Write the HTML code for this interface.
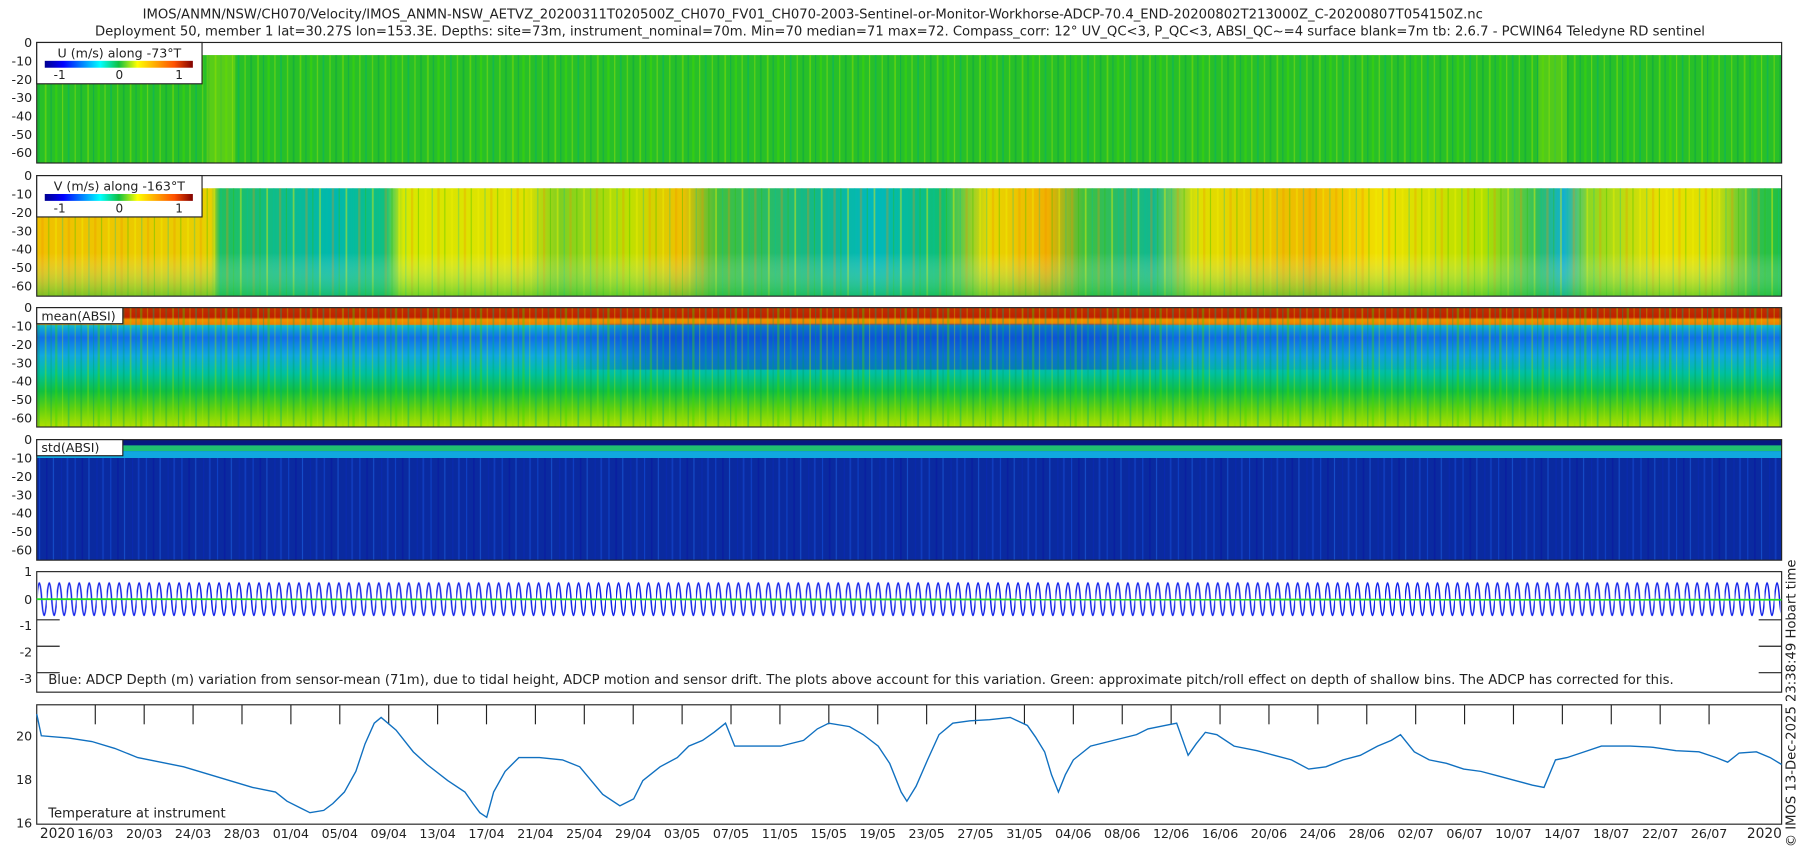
<!DOCTYPE html>
<html><head><meta charset="utf-8"><style>
html,body{margin:0;padding:0;background:#fff;}
svg{display:block;}
text{font-family:"DejaVu Sans","Liberation Sans",sans-serif;fill:#222;}
</style></head><body>
<svg width="1800" height="850" viewBox="0 0 1568 740.5" preserveAspectRatio="none" xmlns="http://www.w3.org/2000/svg">
<defs>
<pattern id="strG" width="37" height="10" patternUnits="userSpaceOnUse">
<rect x="2" width="1.5" height="10" fill="#8de000" opacity=".5"/><rect x="7" width="1" height="10" fill="#00a060" opacity=".5"/>
<rect x="11" width="2" height="10" fill="#40d800" opacity=".5"/><rect x="17" width="1" height="10" fill="#c0f000" opacity=".4"/>
<rect x="22" width="1.5" height="10" fill="#00b070" opacity=".5"/><rect x="28" width="1" height="10" fill="#a8e800" opacity=".45"/>
<rect x="33" width="1.5" height="10" fill="#009a50" opacity=".4"/></pattern>
<pattern id="strB" width="31" height="10" patternUnits="userSpaceOnUse">
<rect x="3" width="1" height="10" fill="#1050e0" opacity=".6"/><rect x="9" width="1.5" height="10" fill="#0818a0" opacity=".6"/>
<rect x="15" width="1" height="10" fill="#2070f0" opacity=".5"/><rect x="22" width="1" height="10" fill="#0828b8" opacity=".6"/>
<rect x="27" width="1.5" height="10" fill="#1858e8" opacity=".4"/></pattern>
<pattern id="strY" width="23" height="10" patternUnits="userSpaceOnUse">
<rect x="2" width="1.5" height="10" fill="#f0f000" opacity=".45"/><rect x="8" width="1" height="10" fill="#00c0a0" opacity=".35"/>
<rect x="13" width="2" height="10" fill="#f09000" opacity=".3"/><rect x="19" width="1" height="10" fill="#30c000" opacity=".4"/></pattern>
<pattern id="wave" width="8.7" height="44" patternUnits="userSpaceOnUse" x="32" y="500">
<path d="M0 22 C1.5 3 3 3 4.35 22 C5.7 41 7.2 41 8.7 22" fill="none" stroke="#1020e8" stroke-width="1.3"/></pattern>
<linearGradient id="v1" x1="0" x2="1" y1="0" y2="0">
<stop offset="0" stop-color="#f0c000"/><stop offset=".1" stop-color="#e8d000"/><stop offset=".105" stop-color="#20c060"/>
<stop offset=".17" stop-color="#00b8b0"/><stop offset=".2" stop-color="#10c080"/><stop offset=".21" stop-color="#d8e800"/>
<stop offset=".28" stop-color="#e0e000"/><stop offset=".3" stop-color="#80d020"/><stop offset=".34" stop-color="#c0e000"/>
<stop offset=".37" stop-color="#f0c000"/><stop offset=".39" stop-color="#40c040"/><stop offset=".45" stop-color="#10b890"/>
<stop offset=".48" stop-color="#00b8c0"/><stop offset=".52" stop-color="#10c070"/><stop offset=".545" stop-color="#e8d800"/>
<stop offset=".58" stop-color="#f0b000"/><stop offset=".6" stop-color="#40c040"/><stop offset=".64" stop-color="#10b890"/>
<stop offset=".665" stop-color="#e0e000"/><stop offset=".73" stop-color="#f0b800"/><stop offset=".77" stop-color="#f0e000"/>
<stop offset=".83" stop-color="#b0e000"/><stop offset=".86" stop-color="#30c060"/><stop offset=".875" stop-color="#10b0d0"/>
<stop offset=".89" stop-color="#90d820"/><stop offset=".93" stop-color="#e8e000"/><stop offset=".96" stop-color="#e0e000"/>
<stop offset=".985" stop-color="#30c050"/><stop offset="1" stop-color="#20c040"/></linearGradient>
<linearGradient id="v1v" x1="0" x2="0" y1="0" y2="1">
<stop offset="0" stop-color="#fff" stop-opacity="0"/><stop offset=".6" stop-color="#fff" stop-opacity="0"/><stop offset="1" stop-color="#20c040" stop-opacity=".55"/></linearGradient>
<linearGradient id="m3" x1="0" x2="0" y1="0" y2="1">
<stop offset="0" stop-color="#c03000"/><stop offset=".08" stop-color="#c02000"/><stop offset=".1" stop-color="#f09000"/>
<stop offset=".14" stop-color="#f08000"/><stop offset=".15" stop-color="#10b8d0"/><stop offset=".25" stop-color="#1070e8"/>
<stop offset=".4" stop-color="#10a8e0"/><stop offset=".55" stop-color="#00c0a0"/><stop offset=".7" stop-color="#10c040"/>
<stop offset=".85" stop-color="#60d010"/><stop offset="1" stop-color="#b0e000"/></linearGradient>
<linearGradient id="m3h" x1="0" x2="1" y1="0" y2="0">
<stop offset="0" stop-color="#0830c0" stop-opacity="0"/><stop offset=".3" stop-color="#0830c0" stop-opacity="0"/>
<stop offset=".36" stop-color="#0830c0" stop-opacity=".45"/><stop offset=".6" stop-color="#0830c0" stop-opacity=".45"/>
<stop offset=".66" stop-color="#0830c0" stop-opacity=".1"/><stop offset="1" stop-color="#0830c0" stop-opacity="0"/></linearGradient>
<linearGradient id="jet" x1="0" x2="1"><stop offset="0" stop-color="#00008f"/><stop offset=".125" stop-color="#0000ff"/><stop offset=".375" stop-color="#00ffff"/><stop offset=".5" stop-color="#10c040"/><stop offset=".625" stop-color="#ffff00"/><stop offset=".875" stop-color="#ff5000"/><stop offset="1" stop-color="#800000"/></linearGradient>
</defs>

<text x="708" y="16" font-size="11.5" text-anchor="middle">IMOS/ANMN/NSW/CH070/Velocity/IMOS_ANMN-NSW_AETVZ_20200311T020500Z_CH070_FV01_CH070-2003-Sentinel-or-Monitor-Workhorse-ADCP-70.4_END-20200802T213000Z_C-20200807T054150Z.nc</text>
<text x="784" y="31" font-size="11.5" text-anchor="middle">Deployment 50, member 1 lat=30.27S lon=153.3E. Depths: site=73m, instrument_nominal=70m. Min=70 median=71 max=72. Compass_corr: 12° UV_QC&lt;3, P_QC&lt;3, ABSI_QC~=4 surface blank=7m tb: 2.6.7 - PCWIN64 Teledyne RD sentinel</text>

<!-- Panel 1 -->
<rect x="32" y="48" width="1520" height="94" fill="#28c028"/>
<rect x="32" y="48" width="1520" height="94" fill="url(#strG)"/>
<rect x="180" y="48" width="25" height="94" fill="#a0e000" opacity=".4"/>
<rect x="1340" y="48" width="25" height="94" fill="#a0e000" opacity=".35"/>
<rect x="32" y="37" width="1520" height="105" fill="none" stroke="#222" stroke-width="1"/>
<!-- Panel 2 -->
<rect x="32" y="164" width="1520" height="94" fill="url(#v1)"/>
<rect x="32" y="164" width="1520" height="94" fill="url(#strY)"/>
<rect x="32" y="164" width="1520" height="94" fill="url(#v1v)"/>
<rect x="32" y="153" width="1520" height="105" fill="none" stroke="#222"/>
<!-- Panel 3 -->
<rect x="32" y="268" width="1520" height="104" fill="url(#m3)"/>
<rect x="32" y="282" width="1520" height="40" fill="url(#m3h)"/>
<rect x="32" y="268" width="1520" height="104" fill="url(#strG)" opacity=".8"/>
<rect x="32" y="268" width="1520" height="104" fill="none" stroke="#222"/>
<!-- Panel 4 -->
<rect x="32" y="383" width="1520" height="105" fill="#0a2aa0"/>
<rect x="32" y="383" width="1520" height="5" fill="#061a80"/>
<rect x="32" y="388" width="1520" height="5" fill="#20c070"/>
<rect x="32" y="393" width="1520" height="6" fill="#10a8e0"/>
<rect x="32" y="399" width="1520" height="89" fill="url(#strB)"/>
<rect x="32" y="383" width="1520" height="105" fill="none" stroke="#222"/>
<!-- Panel 5 -->
<rect x="32" y="498" width="1520" height="105" fill="#fff" stroke="#222"/>
<rect x="33" y="500" width="1518" height="44" fill="url(#wave)"/>
<line x1="32" y1="522" x2="1552" y2="522.5" stroke="#20e020" stroke-width="1.6"/>
<g stroke="#222"><line x1="32" y1="540" x2="52" y2="540"/><line x1="32" y1="563" x2="52" y2="563"/><line x1="32" y1="586" x2="52" y2="586"/>
<line x1="1532" y1="540" x2="1552" y2="540"/><line x1="1532" y1="563" x2="1552" y2="563"/><line x1="1532" y1="586" x2="1552" y2="586"/></g>
<text x="42" y="596" font-size="11.5">Blue: ADCP Depth (m) variation from sensor-mean (71m), due to tidal height, ADCP motion and sensor drift. The plots above account for this variation. Green: approximate pitch/roll effect on depth of shallow bins. The ADCP has corrected for this.</text>
<!-- Panel 6 -->
<rect x="32" y="614" width="1520" height="104" fill="#fff" stroke="#222"/>
<g stroke="#222">
<line x1="83" y1="614" x2="83" y2="631"/><line x1="125.6" y1="614" x2="125.6" y2="631"/><line x1="168.2" y1="614" x2="168.2" y2="631"/><line x1="210.8" y1="614" x2="210.8" y2="631"/><line x1="253.4" y1="614" x2="253.4" y2="631"/><line x1="296" y1="614" x2="296" y2="631"/><line x1="338.6" y1="614" x2="338.6" y2="631"/><line x1="381.2" y1="614" x2="381.2" y2="631"/><line x1="423.8" y1="614" x2="423.8" y2="631"/><line x1="466.4" y1="614" x2="466.4" y2="631"/><line x1="509" y1="614" x2="509" y2="631"/><line x1="551.6" y1="614" x2="551.6" y2="631"/><line x1="594.2" y1="614" x2="594.2" y2="631"/><line x1="636.8" y1="614" x2="636.8" y2="631"/><line x1="679.4" y1="614" x2="679.4" y2="631"/><line x1="722" y1="614" x2="722" y2="631"/><line x1="764.6" y1="614" x2="764.6" y2="631"/><line x1="807.2" y1="614" x2="807.2" y2="631"/><line x1="849.8" y1="614" x2="849.8" y2="631"/><line x1="892.4" y1="614" x2="892.4" y2="631"/><line x1="935" y1="614" x2="935" y2="631"/><line x1="977.6" y1="614" x2="977.6" y2="631"/><line x1="1020.2" y1="614" x2="1020.2" y2="631"/><line x1="1062.8" y1="614" x2="1062.8" y2="631"/><line x1="1105.4" y1="614" x2="1105.4" y2="631"/><line x1="1148" y1="614" x2="1148" y2="631"/><line x1="1190.6" y1="614" x2="1190.6" y2="631"/><line x1="1233.2" y1="614" x2="1233.2" y2="631"/><line x1="1275.8" y1="614" x2="1275.8" y2="631"/><line x1="1318.4" y1="614" x2="1318.4" y2="631"/><line x1="1361" y1="614" x2="1361" y2="631"/><line x1="1403.6" y1="614" x2="1403.6" y2="631"/><line x1="1446.2" y1="614" x2="1446.2" y2="631"/><line x1="1488.8" y1="614" x2="1488.8" y2="631"/>
</g>
<polyline fill="none" stroke="#1070c0" stroke-width="1.2" points="32,622 36,641 60,643 80,646 100,652 120,660 140,664 160,668 180,674 200,680 220,686 240,690 250,698 262,704 270,708 282,706 290,700 300,690 310,672 318,648 326,630 332,625 345,636 360,655 372,666 390,680 405,690 412,700 418,708 424,712 430,690 440,672 452,660 470,660 490,662 505,668 515,680 525,692 540,702 552,696 560,680 575,668 590,660 600,650 612,645 622,638 632,630 640,650 655,650 680,650 700,645 712,635 722,630 740,633 752,640 765,650 775,665 785,690 790,698 798,685 808,662 818,640 830,630 845,628 862,627 880,625 895,632 902,642 910,655 916,675 922,690 928,675 935,662 950,650 970,645 990,640 1000,635 1015,632 1025,630 1035,658 1042,648 1050,638 1060,640 1075,650 1095,654 1110,658 1125,662 1140,670 1155,668 1170,662 1185,658 1200,650 1212,645 1220,640 1232,655 1245,662 1260,665 1275,670 1290,672 1305,676 1320,680 1335,684 1345,686 1355,662 1365,660 1380,655 1395,650 1420,650 1440,651 1460,654 1480,655 1495,660 1505,664 1515,656 1530,655 1542,660 1552,666"/>
<text x="42" y="712" font-size="11.5">Temperature at instrument</text>

<g font-size="11" text-anchor="end">
<text x="28" y="41">0</text><text x="28" y="57">-10</text><text x="28" y="73">-20</text><text x="28" y="89">-30</text><text x="28" y="105">-40</text><text x="28" y="121">-50</text><text x="28" y="137">-60</text>
<text x="28" y="157">0</text><text x="28" y="173">-10</text><text x="28" y="189">-20</text><text x="28" y="205">-30</text><text x="28" y="221">-40</text><text x="28" y="237">-50</text><text x="28" y="253">-60</text>
<text x="28" y="272">0</text><text x="28" y="288">-10</text><text x="28" y="304">-20</text><text x="28" y="320">-30</text><text x="28" y="336">-40</text><text x="28" y="352">-50</text><text x="28" y="368">-60</text>
<text x="28" y="387">0</text><text x="28" y="403">-10</text><text x="28" y="419">-20</text><text x="28" y="435">-30</text><text x="28" y="451">-40</text><text x="28" y="467">-50</text><text x="28" y="483">-60</text>
<text x="28" y="502">1</text><text x="28" y="526">0</text><text x="28" y="549">-1</text><text x="28" y="572">-2</text><text x="28" y="595">-3</text>
<text x="28" y="645">20</text><text x="28" y="683">18</text><text x="28" y="721">16</text>
</g>
<g font-size="11" text-anchor="middle">
<text x="50" y="730" font-size="12">2020</text><text x="1537" y="730" font-size="12">2020</text>
<text x="83" y="730">16/03</text><text x="125.6" y="730">20/03</text><text x="168.2" y="730">24/03</text><text x="210.8" y="730">28/03</text><text x="253.4" y="730">01/04</text><text x="296" y="730">05/04</text><text x="338.6" y="730">09/04</text><text x="381.2" y="730">13/04</text><text x="423.8" y="730">17/04</text><text x="466.4" y="730">21/04</text><text x="509" y="730">25/04</text><text x="551.6" y="730">29/04</text><text x="594.2" y="730">03/05</text><text x="636.8" y="730">07/05</text><text x="679.4" y="730">11/05</text><text x="722" y="730">15/05</text><text x="764.6" y="730">19/05</text><text x="807.2" y="730">23/05</text><text x="849.8" y="730">27/05</text><text x="892.4" y="730">31/05</text><text x="935" y="730">04/06</text><text x="977.6" y="730">08/06</text><text x="1020.2" y="730">12/06</text><text x="1062.8" y="730">16/06</text><text x="1105.4" y="730">20/06</text><text x="1148" y="730">24/06</text><text x="1190.6" y="730">28/06</text><text x="1233.2" y="730">02/07</text><text x="1275.8" y="730">06/07</text><text x="1318.4" y="730">10/07</text><text x="1361" y="730">14/07</text><text x="1403.6" y="730">18/07</text><text x="1446.2" y="730">22/07</text><text x="1488.8" y="730">26/07</text>
</g>
<text transform="translate(1564,738) rotate(-90)" font-size="11.5">© IMOS 13-Dec-2025 23:38:49 Hobart time</text>

<rect x="32" y="37" width="144" height="36" fill="#fff" stroke="#222"/>
<text x="104" y="50" font-size="11" text-anchor="middle">U (m/s) along -73°T</text>
<rect x="39" y="53" width="129" height="6" fill="url(#jet)"/>
<text x="52" y="69" font-size="10.5" text-anchor="middle">-1</text><text x="104" y="69" font-size="10.5" text-anchor="middle">0</text><text x="156" y="69" font-size="10.5" text-anchor="middle">1</text>
<rect x="32" y="153" width="144" height="36" fill="#fff" stroke="#222"/>
<text x="104" y="166" font-size="11" text-anchor="middle">V (m/s) along -163°T</text>
<rect x="39" y="169" width="129" height="6" fill="url(#jet)"/>
<text x="52" y="185" font-size="10.5" text-anchor="middle">-1</text><text x="104" y="185" font-size="10.5" text-anchor="middle">0</text><text x="156" y="185" font-size="10.5" text-anchor="middle">1</text>
<rect x="32" y="268" width="75" height="14" fill="#fff" stroke="#222"/>
<text x="36" y="279" font-size="11">mean(ABSI)</text>
<rect x="32" y="383" width="75" height="14" fill="#fff" stroke="#222"/>
<text x="36" y="394" font-size="11">std(ABSI)</text>
</svg>
</body></html>
